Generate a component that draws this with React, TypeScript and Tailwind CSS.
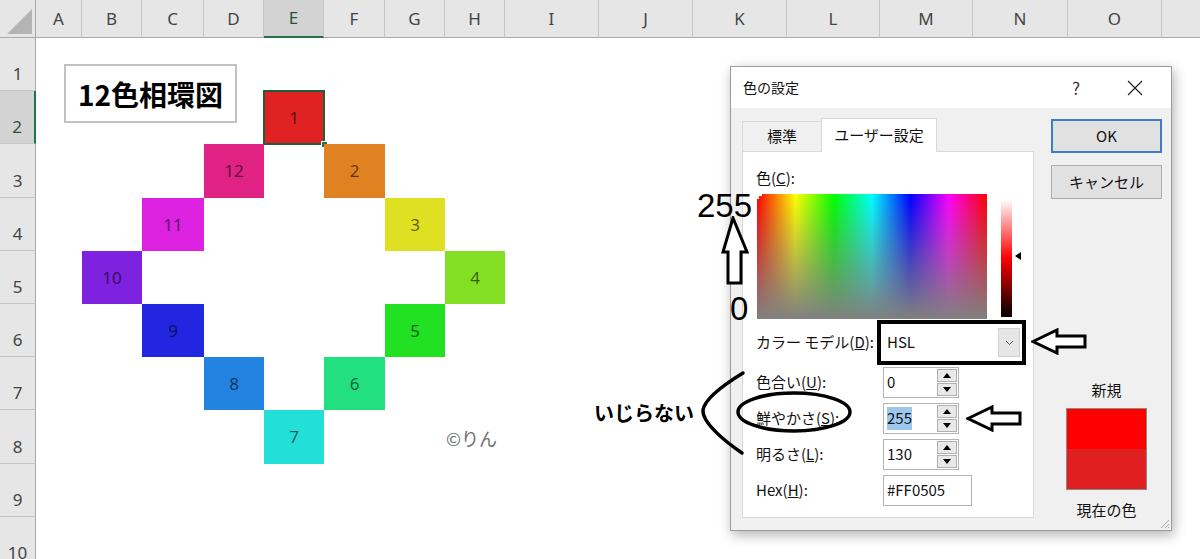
import React from 'react';

const COLS = ['A', 'B', 'C', 'D', 'E', 'F', 'G', 'H', 'I', 'J', 'K', 'L', 'M', 'N', 'O'];

const ROWS = [
  { n: '1', pos: 'row-start-2' },
  { n: '2', pos: 'row-start-3', sel: true },
  { n: '3', pos: 'row-start-4' },
  { n: '4', pos: 'row-start-5' },
  { n: '5', pos: 'row-start-6' },
  { n: '6', pos: 'row-start-7' },
  { n: '7', pos: 'row-start-8' },
  { n: '8', pos: 'row-start-9' },
  { n: '9', pos: 'row-start-10' },
  { n: '10', pos: 'row-start-11' },
];

// 12 hue cells, placed on the sheet grid
const HUES = [
  { n: '1', pos: 'col-start-6 row-start-3', bg: 'bg-[#e02222]', sel: true },
  { n: '2', pos: 'col-start-7 row-start-4', bg: 'bg-[#e08222]' },
  { n: '3', pos: 'col-start-8 row-start-5', bg: 'bg-[#e0e022]' },
  { n: '4', pos: 'col-start-9 row-start-6', bg: 'bg-[#84e024]' },
  { n: '5', pos: 'col-start-8 row-start-7', bg: 'bg-[#22e022]' },
  { n: '6', pos: 'col-start-7 row-start-8', bg: 'bg-[#22e080]' },
  { n: '7', pos: 'col-start-6 row-start-9', bg: 'bg-[#22e0d8]' },
  { n: '8', pos: 'col-start-5 row-start-8', bg: 'bg-[#2284e0]' },
  { n: '9', pos: 'col-start-4 row-start-7', bg: 'bg-[#2226e0]' },
  { n: '10', pos: 'col-start-3 row-start-6', bg: 'bg-[#7e22e0]' },
  { n: '11', pos: 'col-start-4 row-start-5', bg: 'bg-[#dc22e0]' },
  { n: '12', pos: 'col-start-5 row-start-4', bg: 'bg-[#e02284]' },
];

function Spin({ value, selected = false }: { value: string; selected?: boolean }) {
  return (
    <div className="flex w-[76px] h-[31px] border border-[#b4b4b4] bg-white">
      <div className="flex-1 flex items-center pl-[3px] text-[15px]">
        <span className={selected ? 'bg-[#9cc8ee] text-[#111]' : ''}>{value}</span>
      </div>
      <div className="w-[22px] flex flex-col gap-px p-px">
        <div className="flex-1 flex items-center justify-center bg-[#e8e8e8] border border-[#b0b0b0]">
          <div className="w-0 h-0 border-x-[4px] border-x-transparent border-b-[5px] border-b-black" />
        </div>
        <div className="flex-1 flex items-center justify-center bg-[#e8e8e8] border border-[#b0b0b0]">
          <div className="w-0 h-0 border-x-[4px] border-x-transparent border-t-[5px] border-t-black" />
        </div>
      </div>
    </div>
  );
}

function LeftArrow({ className }: { className: string }) {
  return (
    <svg width="56" height="27" viewBox="0 0 56 27" className={className}>
      <path d="M2 13.5 L26 2 L26 8 L54 8 L54 19 L26 19 L26 25 Z" fill="white" stroke="black" strokeWidth="3" />
    </svg>
  );
}

export default function App() {
  return (
    <div className="relative w-[1200px] h-[559px] overflow-hidden bg-white font-['Noto_Sans',sans-serif]">
      {/* sheet */}
      <div className="grid grid-cols-[36px_46px_60px_62px_60px_60px_61px_60px_60px_94px_94px_94px_93px_93px_95px_94px_1fr] grid-rows-[38px_53px_53px_54px_53px_53px_53px_53px_54px_53px_53px]">
        <div className="relative col-start-1 row-start-1 bg-[#e6e6e6] border-r border-b border-[#a8a8a8]">
          <div className="absolute right-[3px] bottom-[3px] w-0 h-0 border-l-[25px] border-l-transparent border-b-[25px] border-b-[#b4b4b4]" />
        </div>
        {COLS.map((c) =>
          c === 'E' ? (
            <div key={c} className="row-start-1 flex items-center justify-center bg-[#d3d3d3] border-r border-r-[#c6c6c6] border-b-2 border-b-[#217346] text-[17px] text-[#24573a]">
              {c}
            </div>
          ) : (
            <div key={c} className="row-start-1 flex items-center justify-center bg-[#e6e6e6] border-r border-r-[#c6c6c6] border-b border-b-[#a8a8a8] text-[17px] text-[#444]">
              {c}
            </div>
          )
        )}
        <div className="row-start-1 bg-[#e6e6e6] border-b border-b-[#a8a8a8]" />

        {ROWS.map((r) => (
          <div
            key={r.n}
            className={`col-start-1 ${r.pos} flex items-end justify-center pb-[6px] text-[17px] leading-[20px] border-b border-b-[#c6c6c6] ${
              r.sel ? 'bg-[#d3d3d3] border-r-2 border-r-[#217346] text-[#24573a]' : 'bg-[#e6e6e6] border-r border-r-[#a8a8a8] text-[#444]'
            }`}
          >
            {r.n}
          </div>
        ))}

        {HUES.map((h) => (
          <div
            key={h.n}
            className={`relative ${h.pos} ${h.bg} flex items-center justify-center text-[17px] text-black/60 ${
              h.sel ? 'outline-2 outline-[#1f5e3a] -outline-offset-1' : ''
            }`}
          >
            {h.n}
            {h.sel && <div className="absolute -right-[4px] -bottom-[4px] w-[7px] h-[7px] bg-[#217346] border border-white" />}
          </div>
        ))}
      </div>

      {/* title text box */}
      <div className="absolute left-[64px] top-[64px] w-[173px] h-[59px] border-2 border-[#c2c2c2] bg-white flex items-center pl-[12px] text-[28px] font-bold text-black font-['Noto_Sans_CJK_JP',sans-serif]">
        12色相環図
      </div>

      <div className="absolute left-[446px] top-[425px] text-[18px] text-[#707070] font-['Noto_Sans_CJK_JP',sans-serif]">©りん</div>

      {/* color dialog */}
      <div className="absolute left-[730px] top-[66px] w-[442px] h-[465px] border border-[#9b9b9b] bg-[#f0f0f0] shadow-[2px_4px_12px_rgba(0,0,0,0.3)] text-[#111] font-['Noto_Sans_CJK_JP',sans-serif]">
        <div className="h-[41px] bg-white flex items-center text-[14px]">
          <span className="pl-[12px]">色の設定</span>
          <span className="ml-auto w-[46px] text-center text-[17px] text-[#333]">?</span>
          <span className="w-[72px] flex justify-center">
            <svg width="16" height="16" viewBox="0 0 16 16">
              <path d="M1 1 L15 15 M15 1 L1 15" stroke="#222" strokeWidth="1.2" />
            </svg>
          </span>
        </div>

        <div className="relative flex h-[422px]">
          <div className="pl-[11px] pt-[10px]">
            <div className="flex items-end h-[33px]">
              <div className="w-[79px] h-[30px] border-t border-l border-[#d9d9d9] flex items-center justify-center text-[15px]">標準</div>
              <div className="relative z-10 w-[116px] h-[34px] -mb-px bg-white border border-b-0 border-[#d9d9d9] flex items-center justify-center text-[15px]">
                ユーザー設定
              </div>
            </div>
            <div className="w-[292px] h-[367px] bg-white border border-[#d9d9d9] pl-[13px] pt-[16px] text-[15px]">
              <div className="leading-[20px]">
                色(<u>C</u>):
              </div>
              <div className="mt-[6px] flex">
                <div className="relative ml-px w-[230px] h-[125px] bg-[linear-gradient(to_right,#ff0000,#ffff00,#00ff00,#00ffff,#0000ff,#ff00ff,#ff0000)]">
                  <div className="absolute inset-0 bg-[linear-gradient(to_bottom,rgba(128,128,128,0),#808080)]" />
                  <div className="absolute left-0 top-0 w-[5px] h-[5px] border-l-2 border-t-2 border-white" />
                </div>
                <div className="ml-[14px] mt-[5px] w-[11px] h-[118px] bg-[linear-gradient(to_bottom,#ffffff,#ff0000_50%,#000000)]" />
                <div className="ml-[3px] mt-[58px] w-0 h-0 border-y-[4px] border-y-transparent border-r-[6px] border-r-black" />
              </div>
              <div className="mt-px flex items-center">
                <div className="w-[121px]">
                  カラー モデル(<u>D</u>):
                </div>
                <div className="w-[149px] h-[45px] border-[4px] border-black">
                  <div className="h-full bg-white flex items-center">
                    <span className="pl-[6px]">HSL</span>
                    <div className="ml-auto mr-[2px] w-[22px] h-[29px] bg-[#e6e6e6] border border-[#d0d0d0] flex items-center justify-center">
                      <svg width="9" height="6" viewBox="0 0 9 6">
                        <path d="M1 1 L4.5 4.5 L8 1" fill="none" stroke="#555" strokeWidth="1" />
                      </svg>
                    </div>
                  </div>
                </div>
              </div>
              <div className="mt-[2px] flex items-center">
                <div className="w-[127px]">
                  色合い(<u>U</u>):
                </div>
                <Spin value="0" />
              </div>
              <div className="mt-[5px] flex items-center">
                <div className="w-[127px]">
                  鮮やかさ(<u>S</u>):
                </div>
                <Spin value="255" selected />
              </div>
              <div className="mt-[5px] flex items-center">
                <div className="w-[127px]">
                  明るさ(<u>L</u>):
                </div>
                <Spin value="130" />
              </div>
              <div className="mt-[5px] flex items-center">
                <div className="w-[127px]">
                  Hex(<u>H</u>):
                </div>
                <div className="w-[89px] h-[31px] border border-[#b4b4b4] bg-white flex items-center pl-[3px]">#FF0505</div>
              </div>
            </div>
          </div>

          <div className="ml-[17px] pt-[11px] w-[111px] flex flex-col items-center text-[15px]">
            <div className="w-full h-[34px] border-2 border-[#3a7fc4] bg-[#e1e1e1] flex items-center justify-center">OK</div>
            <div className="mt-[12px] w-full h-[34px] border border-[#adadad] bg-[#e1e1e1] flex items-center justify-center">キャンセル</div>
            <div className="mt-[181px] leading-[20px]">新規</div>
            <div className="mt-[8px] w-[81px] h-[82px] border border-[#8a8a8a] flex flex-col">
              <div className="flex-1 bg-[#ff0000]" />
              <div className="flex-1 bg-[#e02020]" />
            </div>
            <div className="mt-[10px] leading-[20px]">現在の色</div>
          </div>

          <svg width="12" height="12" viewBox="0 0 12 12" className="absolute right-[1px] bottom-[1px]">
            <path d="M11 3 L3 11 M11 7 L7 11 M11 10 L10 11" stroke="#aaa" strokeWidth="1" />
          </svg>
        </div>
      </div>

      {/* annotations */}
      <div className="absolute left-[697px] top-[189px] text-[33px] leading-none text-black font-['Liberation_Sans',sans-serif]">255</div>
      <div className="absolute left-[730px] top-[292px] text-[33px] leading-none text-black font-['Liberation_Sans',sans-serif]">0</div>
      <svg width="30" height="70" viewBox="0 0 30 70" className="absolute left-[720px] top-[216px]">
        <path d="M13 2 L27 36 L21 36 L21 67 L8 67 L8 36 L3 36 Z" fill="white" stroke="black" strokeWidth="3" />
      </svg>

      <LeftArrow className="absolute left-[1031px] top-[328px]" />
      <LeftArrow className="absolute left-[966px] top-[405px]" />

      <svg width="118" height="44" viewBox="0 0 118 44" className="absolute left-[735px] top-[390px]">
        <ellipse cx="59" cy="22" rx="56" ry="19" fill="none" stroke="black" strokeWidth="3.5" />
      </svg>
      <svg width="55" height="95" viewBox="0 0 55 95" className="absolute left-[695px] top-[366px]">
        <path d="M48 7 C 30 18, 10 32, 8 44 C 7 56, 28 74, 47 87" fill="none" stroke="black" strokeWidth="3.5" strokeLinecap="round" />
      </svg>
      <div className="absolute left-[594px] top-[398px] text-[20px] font-bold text-black font-['Noto_Sans_CJK_JP',sans-serif]">いじらない</div>
    </div>
  );
}
